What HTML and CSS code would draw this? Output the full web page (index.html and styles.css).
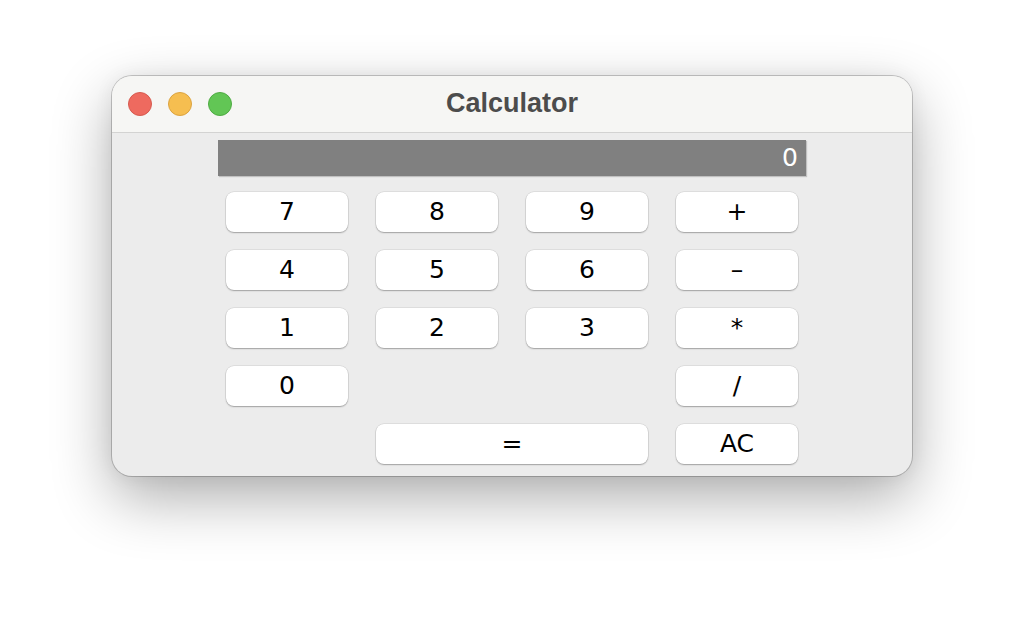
FILE: index.html
```html
<!DOCTYPE html>
<html>
<head>
<meta charset="utf-8">
<title>Calculator</title>
<link rel="stylesheet" href="styles.css">
</head>
<body>
<div class="desktop">
  <div class="window">
    <div class="titlebar">
      <div class="lights">
        <span class="light red"></span>
        <span class="light yellow"></span>
        <span class="light green"></span>
      </div>
      <div class="title">Calculator</div>
      <div class="spacer"></div>
    </div>
    <div class="content">
      <div class="calc">
        <div class="display">0</div>
        <div class="keys">
          <button class="key">7</button>
          <button class="key">8</button>
          <button class="key">9</button>
          <button class="key">+</button>
          <button class="key">4</button>
          <button class="key">5</button>
          <button class="key">6</button>
          <button class="key">–</button>
          <button class="key">1</button>
          <button class="key">2</button>
          <button class="key">3</button>
          <button class="key">*</button>
          <button class="key">0</button>
          <button class="key col4">/</button>
          <button class="key wide">=</button>
          <button class="key">AC</button>
        </div>
      </div>
    </div>
  </div>
</div>
</body>
</html>
```
FILE: styles.css
```css
html, body {
  margin: 0;
  padding: 0;
  background: #ffffff;
}

.desktop {
  width: 1024px;
  height: 624px;
  padding-top: 76px;
  box-sizing: border-box;
  overflow: hidden;
}

.window {
  width: 800px;
  height: 400px;
  margin: 0 auto;
  border-radius: 20px;
  overflow: hidden;
  background: #ececec;
  box-shadow: 0 0 0 1px rgba(0, 0, 0, 0.2), 0 22px 60px rgba(0, 0, 0, 0.32), 0 0 20px rgba(0, 0, 0, 0.06);
  display: flex;
  flex-direction: column;
}

.titlebar {
  height: 56px;
  background: #f6f6f4;
  border-bottom: 1px solid #d3d3d2;
  display: grid;
  grid-template-columns: 1fr auto 1fr;
  align-items: center;
  flex: none;
}

.lights {
  display: flex;
  gap: 16px;
  padding-left: 16px;
}

.light {
  width: 22px;
  height: 22px;
  border-radius: 50%;
  display: block;
  border: 1px solid transparent;
}

.red { background: #ee6a5f; border-color: #d65a4f; }
.yellow { background: #f6be50; border-color: #dba340; }
.green { background: #62c655; border-color: #4fab43; }

.title {
  font-family: "Liberation Sans", Arial, sans-serif;
  font-weight: bold;
  font-size: 27px;
  color: #4c4c4c;
  margin-top: -2px;
}

.content {
  flex: 1;
  display: flex;
  justify-content: center;
  padding-top: 7px;
}

.calc {
  width: 588px;
  display: flex;
  flex-direction: column;
}

.display {
  height: 36px;
  background: #808080;
  color: #ffffff;
  font-family: "DejaVu Sans", sans-serif;
  font-size: 25px;
  line-height: 36px;
  text-align: right;
  padding-right: 8px;
  box-shadow: 1px 1px 1px rgba(0, 0, 0, 0.18);
}

.keys {
  margin-top: 16px;
  padding: 0 8px;
  display: grid;
  grid-template-columns: repeat(4, 122px);
  grid-auto-rows: 40px;
  column-gap: 28px;
  row-gap: 18px;
}

.key {
  margin: 0;
  padding: 0;
  border: none;
  background: #ffffff;
  border-radius: 8px;
  box-shadow: 0 0 0 0.5px rgba(0, 0, 0, 0.12), 0 1px 1.5px rgba(0, 0, 0, 0.28);
  font-family: "DejaVu Sans", sans-serif;
  font-size: 25px;
  color: #000000;
  line-height: 40px;
  text-align: center;
}

.col4 {
  grid-column: 4;
}

.wide {
  grid-column: 2 / span 2;
}
```
